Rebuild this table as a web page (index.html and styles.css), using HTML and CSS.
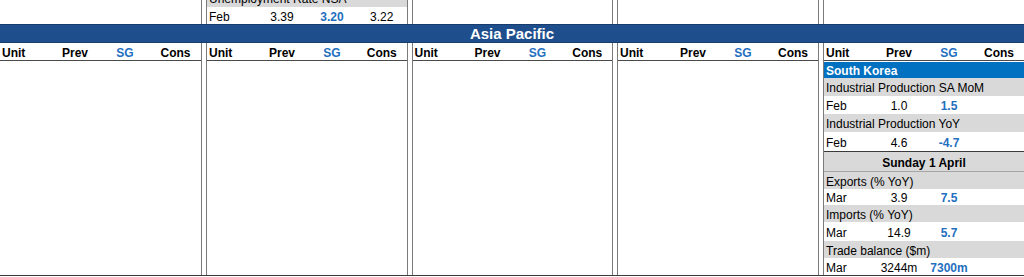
FILE: index.html
```html
<!DOCTYPE html>
<html>
<head>
<meta charset="utf-8">
<link rel="stylesheet" href="styles.css">
</head>
<body>
<div class="sheet">
  <div class="band band-top">
    <div class="col"></div>
    <div class="sep"></div>
    <div class="col col-top">
      <div class="label h18">Unemployment Rate NSA</div>
      <div class="cells h17"><span class="unit">Feb</span><span>3.39</span><span class="sg">3.20</span><span>3.22</span></div>
    </div>
    <div class="sep"></div>
    <div class="col"></div>
    <div class="sep"></div>
    <div class="col"></div>
    <div class="sep"></div>
    <div class="col"></div>
  </div>
  <div class="region">Asia Pacific</div>
  <div class="band band-main">
    <div class="col">
      <div class="cells head"><span class="unit">Unit</span><span>Prev</span><span class="sg">SG</span><span>Cons</span></div>
    </div>
    <div class="sep"></div>
    <div class="col">
      <div class="cells head"><span class="unit">Unit</span><span>Prev</span><span class="sg">SG</span><span>Cons</span></div>
    </div>
    <div class="sep"></div>
    <div class="col">
      <div class="cells head"><span class="unit">Unit</span><span>Prev</span><span class="sg">SG</span><span>Cons</span></div>
    </div>
    <div class="sep"></div>
    <div class="col">
      <div class="cells head"><span class="unit">Unit</span><span>Prev</span><span class="sg">SG</span><span>Cons</span></div>
    </div>
    <div class="sep"></div>
    <div class="col">
      <div class="cells head"><span class="unit">Unit</span><span>Prev</span><span class="sg">SG</span><span>Cons</span></div>
      <div class="country h16">South Korea</div>
      <div class="label h18">Industrial Production SA MoM</div>
      <div class="cells h18"><span class="unit">Feb</span><span>1.0</span><span class="sg">1.5</span><span></span></div>
      <div class="label h18">Industrial Production YoY</div>
      <div class="cells h19"><span class="unit">Feb</span><span>4.6</span><span class="sg">-4.7</span><span></span></div>
      <div class="date h19">Sunday 1 April</div>
      <div class="label h17">Exports (% YoY)</div>
      <div class="cells h16"><span class="unit">Mar</span><span>3.9</span><span class="sg">7.5</span><span></span></div>
      <div class="label h17">Imports (% YoY)</div>
      <div class="cells h19"><span class="unit">Mar</span><span>14.9</span><span class="sg">5.7</span><span></span></div>
      <div class="label h17">Trade balance ($m)</div>
      <div class="cells h17"><span class="unit">Mar</span><span>3244m</span><span class="sg">7300m</span><span></span></div>
    </div>
  </div>
</div>
</body>
</html>
```
FILE: styles.css
```css
body {
  margin: 0;
  background: #fff;
  color: #000;
  font-family: "Liberation Sans", Arial, sans-serif;
  font-size: 12px;
}

.sheet {
  width: 1024px;
  height: 277px;
  overflow: hidden;
}

.band {
  display: grid;
  grid-template-columns: 201px 6px 199.5px 6px 199.5px 6px 200px 6px 1fr;
}

.band-top {
  height: 24px;
}

.band-main {
  height: 232px;
  border-bottom: 1px solid #3a3a3a;
}

.sep {
  box-sizing: border-box;
  border-left: 1px solid #7a7a7a;
  border-right: 1px solid #7a7a7a;
}

.col {
  min-width: 0;
  overflow: hidden;
}

.col-top {
  display: flex;
  flex-direction: column;
  justify-content: flex-end;
}

.region {
  height: 17px;
  line-height: 18px;
  background: #1f4e8c;
  border-top: 1px solid #173d6e;
  border-bottom: 1px solid #173d6e;
  color: #fff;
  font-weight: bold;
  font-size: 15px;
  text-align: center;
}

.cells {
  display: grid;
  grid-template-columns: 50px 50px 50px 1fr;
  text-align: center;
  white-space: nowrap;
}

.cells .unit {
  text-align: left;
  padding-left: 2px;
}

.sg {
  color: #1f6fbf;
  font-weight: bold;
}

.head {
  height: 17px;
  line-height: 20px;
  font-weight: bold;
  border-bottom: 1px solid #4a4a4a;
}

.label {
  background: #d9d9d9;
  padding-left: 2px;
  white-space: nowrap;
}

.country {
  margin-top: 1px;
  background: #0070c0;
  color: #fff;
  font-weight: bold;
  padding-left: 2px;
  white-space: nowrap;
}

.date {
  background: #d9d9d9;
  font-weight: bold;
  text-align: center;
  border-top: 1px solid #3a3a3a;
  border-bottom: 1px solid #a6a6a6;
}

.h16 { height: 16px; line-height: 19px; }
.h17 { height: 17px; line-height: 20px; }
.h18 { height: 18px; line-height: 21px; }
.h19 { height: 19px; line-height: 22px; }
```
